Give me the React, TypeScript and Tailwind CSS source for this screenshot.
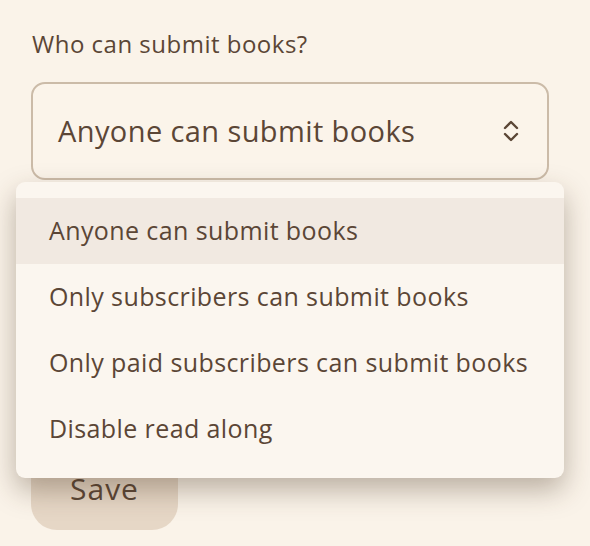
import { useState } from 'react';

const options = [
  'Anyone can submit books',
  'Only subscribers can submit books',
  'Only paid subscribers can submit books',
  'Disable read along',
];

export default function App() {
  const [selected, setSelected] = useState(options[0]);
  const [open, setOpen] = useState(true);

  return (
    <div
      className="min-h-[546px] w-[590px] bg-[#faf3e9] text-[#5b4636] px-[31px] pt-[28px]"
      style={{ fontFamily: '"Open Sans", Lato, sans-serif' }}
    >
      <div className="relative w-[518px]">
        <label className="block text-[24px] leading-[32px] pl-px tracking-[0.5px]">Who can submit books?</label>

        <button
          onClick={() => setOpen(!open)}
          className="mt-[22px] w-full h-[98px] flex items-center justify-between pl-[25px] pr-[28px] rounded-[14px] border-2 border-[#cbbba8] bg-[#fbf4ea] text-[29px] tracking-[0.4px]"
        >
          <span>{selected}</span>
          <svg width="16" height="22" viewBox="0 0 16 22" fill="none" stroke="#5b4636" strokeWidth="2.4" strokeLinecap="round" strokeLinejoin="round">
            <path d="M2 8 L8 2 L14 8" />
            <path d="M2 14 L8 20 L14 14" />
          </svg>
        </button>

        <button className="mt-[266px] h-[84px] w-[147px] rounded-[26px] bg-[#e6d7c6] text-[30px] tracking-[1px]">
          Save
        </button>

        {/* Dropdown */}
        {open && (
          <div className="absolute left-[-15px] right-[-15px] top-[154px] py-4 rounded-[9px] bg-[#fbf6ef] shadow-[0_12px_28px_rgba(70,50,30,0.35)]">
            {options.map(o => (
              <div
                key={o}
                onClick={() => { setSelected(o); setOpen(false); }}
                className={`h-[66px] flex items-center px-[33px] text-[25px] tracking-[0.4px] ${o === selected ? 'bg-[#f1e9e1]' : ''}`}
              >
                {o}
              </div>
            ))}
          </div>
        )}
      </div>
    </div>
  );
}
